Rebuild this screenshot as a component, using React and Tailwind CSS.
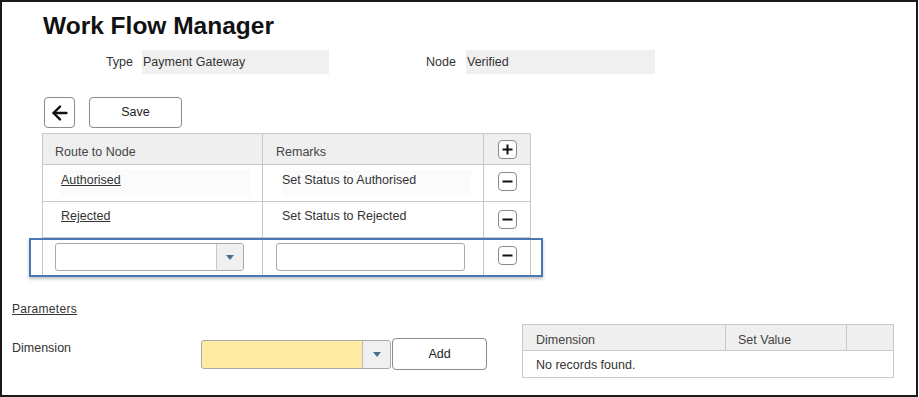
import { ArrowLeft } from "lucide-react";

const font = { fontFamily: '"Liberation Sans", Arial, sans-serif' };

function IconBox({ plus }) {
  return (
    <div className="w-[19px] h-[19px] rounded-[4px] border border-[#8a8a8a] bg-white flex items-center justify-center">
      <svg width="13" height="13" viewBox="0 0 13 13">
        <line x1="1.5" y1="6.5" x2="11.5" y2="6.5" stroke="#111" strokeWidth="2" />
        {plus && <line x1="6.5" y1="1.5" x2="6.5" y2="11.5" stroke="#111" strokeWidth="2" />}
      </svg>
    </div>
  );
}

function Caret() {
  return (
    <svg width="8" height="5" viewBox="0 0 8 5">
      <path d="M0 0h8L4 5z" fill="#4b6f8f" />
    </svg>
  );
}

export default function App() {
  return (
    <div className="w-[918px] h-[397px] bg-white border-2 border-[#1a1a1a] text-[#333]" style={font}>
      {/* TITLE */}
      <h1 className="ml-[41px] mt-[10px] text-[24.5px] leading-[28px] font-bold text-[#111]">
        Work Flow Manager
      </h1>

      {/* TYPE / NODE */}
      <div className="flex items-center mt-[10px] text-[12.5px]">
        <span className="w-[131px] text-right pr-[0px]">Type</span>
        <div className="ml-[9px] w-[187px] h-[24px] bg-[#f0f0f0] flex items-center pl-[1px]">Payment Gateway</div>
        <span className="ml-[97px] w-[31px]">Node</span>
        <div className="ml-[9px] w-[189px] h-[24px] bg-[#f0f0f0] flex items-center pl-[1px]">Verified</div>
      </div>

      {/* BUTTONS */}
      <div className="flex items-center mt-[23px] ml-[42px] gap-[14px]">
        <button className="w-[31px] h-[31px] rounded-[4px] border border-[#8a8a8a] bg-white flex items-center justify-center">
          <ArrowLeft size={22} strokeWidth={2.6} color="#111" />
        </button>
        <button className="w-[93px] h-[31px] rounded-[4px] border border-[#8a8a8a] bg-white text-[12.5px] text-[#222]">
          Save
        </button>
      </div>

      {/* ROUTE TABLE */}
      <div className="relative mt-[5px] ml-[40px] w-[489px]">
        <div className="border border-[#c8c8c8] text-[12.5px]">
          <div className="flex h-[31px] bg-[#efefef] border-b border-[#c8c8c8] text-[#444]">
            <div className="w-[220px] border-r border-[#c8c8c8] pl-[12px] pt-[9px]">Route to Node</div>
            <div className="w-[221px] border-r border-[#c8c8c8] pl-[13px] pt-[9px]">Remarks</div>
            <div className="flex-1 flex justify-center pt-[6px]"><IconBox plus /></div>
          </div>
          <div className="flex h-[37px] border-b border-[#c8c8c8]">
            <div className="w-[220px] border-r border-[#c8c8c8] pl-[18px] pt-[5px]">
              <div className="w-[189px] h-[26px] bg-[#fbfbfb] pt-[1px]"><span className="underline">Authorised</span></div>
            </div>
            <div className="w-[221px] border-r border-[#c8c8c8] pl-[19px] pt-[5px]">
              <div className="w-[189px] h-[26px] bg-[#fbfbfb] pt-[1px]">Set Status to Authorised</div>
            </div>
            <div className="flex-1 flex justify-center pt-[7px]"><IconBox /></div>
          </div>
          <div className="flex h-[36px] border-b border-[#c8c8c8]">
            <div className="w-[220px] border-r border-[#c8c8c8] pl-[18px] pt-[5px]"><span className="underline">Rejected</span></div>
            <div className="w-[221px] border-r border-[#c8c8c8] pl-[19px] pt-[5px]">Set Status to Rejected</div>
            <div className="flex-1 flex justify-center pt-[8px]"><IconBox /></div>
          </div>
          <div className="flex h-[38px]">
            <div className="w-[220px] border-r border-[#c8c8c8] pl-[12px] pt-[5px]">
              <div className="w-[189px] h-[28px] rounded-[3px] border border-[#aaa] bg-white flex">
                <div className="flex-1" />
                <div className="w-[27px] border-l border-[#c8c8c8] bg-[#f0f0f0] flex items-center justify-center rounded-r-[3px]"><Caret /></div>
              </div>
            </div>
            <div className="w-[221px] border-r border-[#c8c8c8] pl-[13px] pt-[5px]">
              <div className="w-[189px] h-[28px] rounded-[3px] border border-[#aaa] bg-white" />
            </div>
            <div className="flex-1 flex justify-center pt-[8px]"><IconBox /></div>
          </div>
        </div>
        {/* highlight annotation */}
        <div className="absolute left-[-13px] top-[105px] w-[514px] h-[39px] border-2 border-[#4a78b4] shadow-[0_2px_3px_rgba(0,0,0,0.25)]" />
      </div>

      {/* PARAMETERS */}
      <div className="flex mt-[25px] text-[12px]">
        <div className="w-[500px] pl-[10px]">
          <div className="underline text-[12px] tracking-[0.3px] h-[14px] leading-[14px]">Parameters</div>
          <div className="flex items-center mt-[22px]">
            <span className="w-[189px] self-start mt-[1px] text-[12.5px]">Dimension</span>
            <div className="w-[190px] h-[29px] rounded-[3px] border border-[#aaa] bg-[#ffeba3] flex">
              <div className="flex-1" />
              <div className="w-[28px] border-l border-[#bbb] bg-[#f0f0f0] flex items-center justify-center rounded-r-[3px]"><Caret /></div>
            </div>
            <button className="ml-[1px] w-[95px] h-[32px] rounded-[4px] border border-[#8a8a8a] bg-white text-[12.5px] text-[#222]">Add</button>
          </div>
        </div>
        <div className="mt-[22px] ml-[20px] w-[372px] border border-[#c8c8c8] text-[12.5px] h-[54px]">
          <div className="flex h-[26px] bg-[#efefef] border-b border-[#c8c8c8] text-[#444]">
            <div className="w-[203px] border-r border-[#c8c8c8] pl-[13px] pt-[6px]">Dimension</div>
            <div className="w-[121px] border-r border-[#c8c8c8] pl-[12px] pt-[6px]">Set Value</div>
            <div className="flex-1" />
          </div>
          <div className="pl-[13px] pt-[5px]">No records found.</div>
        </div>
      </div>
    </div>
  );
}
